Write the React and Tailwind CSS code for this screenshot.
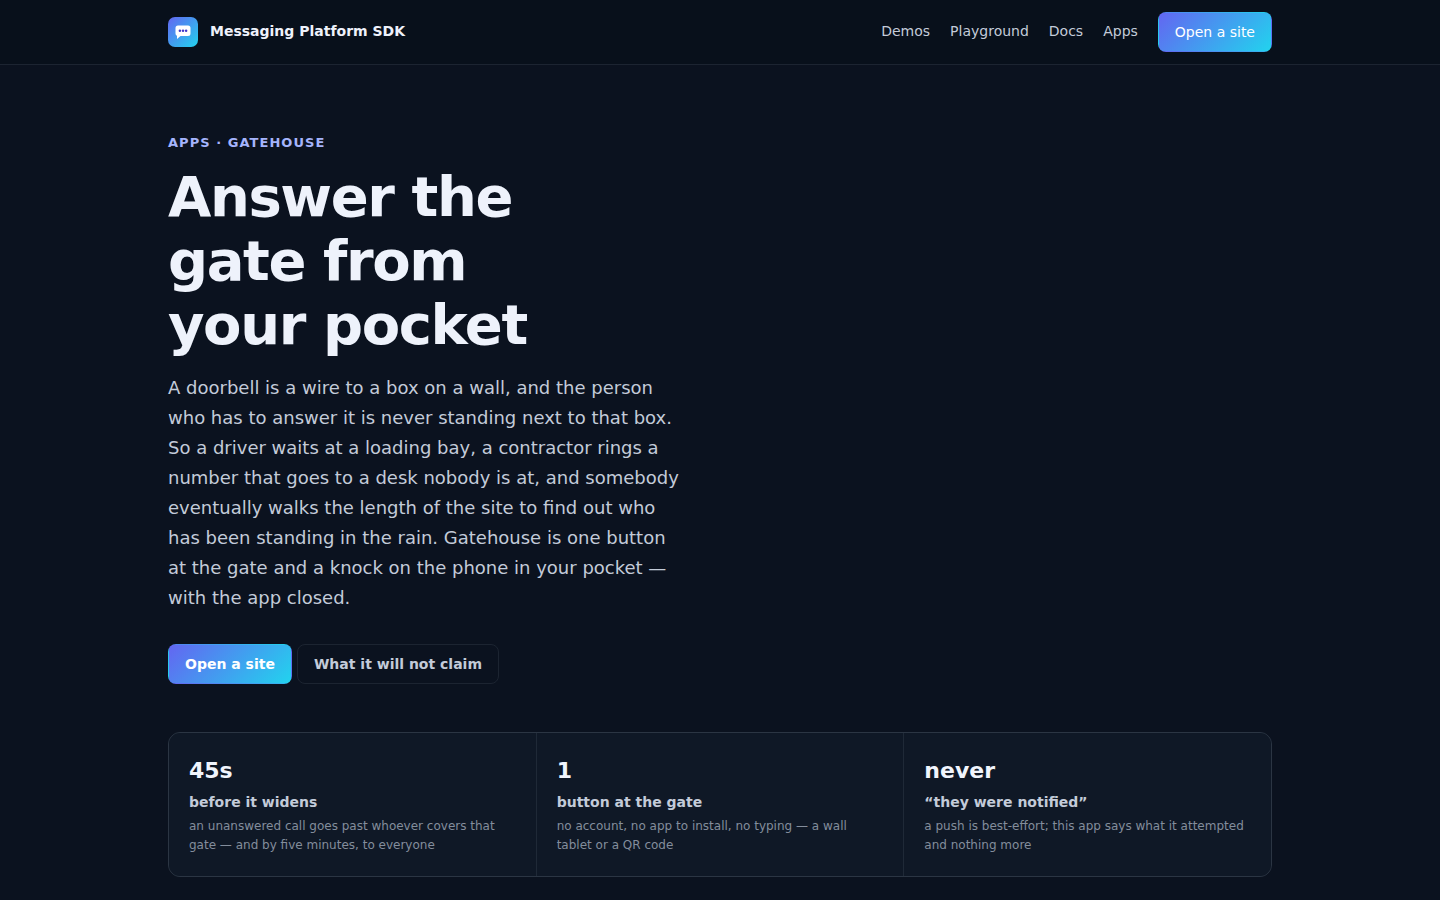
import React from 'react';

const NAV_LINKS = ['Demos', 'Playground', 'Docs', 'Apps'];

const STATS = [
  {
    value: '45s',
    label: 'before it widens',
    detail: 'an unanswered call goes past whoever covers that gate — and by five minutes, to everyone',
  },
  {
    value: '1',
    label: 'button at the gate',
    detail: 'no account, no app to install, no typing — a wall tablet or a QR code',
  },
  {
    value: 'never',
    label: '“they were notified”',
    detail: 'a push is best-effort; this app says what it attempted and nothing more',
  },
];

const Logo = () => (
  <svg className="size-[30px]" viewBox="0 0 30 30" aria-hidden="true">
    <defs>
      <linearGradient id="logo-bg" x1="0" y1="0" x2="1" y2="1">
        <stop offset="0" stopColor="#6366f1" />
        <stop offset="1" stopColor="#22d3ee" />
      </linearGradient>
    </defs>
    <rect width="30" height="30" rx="7" fill="url(#logo-bg)" />
    <path
      d="M10 8.500h10a2.500 2.500 0 0 1 2.500 2.500v5.500a2.500 2.500 0 0 1-2.500 2.500h-7.500L9 22v-3.200a2.500 2.500 0 0 1-1.500-2.300V11a2.500 2.500 0 0 1 2.500-2.500z"
      fill="#fff"
    />
    <circle cx="11.900" cy="13.800" r="1.250" fill="#4338ca" />
    <circle cx="15" cy="13.800" r="1.250" fill="#4338ca" />
    <circle cx="18.100" cy="13.800" r="1.250" fill="#4338ca" />
  </svg>
);

// Gradient call to action, used in the header and in the hero
const PrimaryLink = ({ href, className = '', children }) => (
  <a
    href={href}
    className={`inline-flex h-10 items-center rounded-lg border border-transparent bg-linear-135/srgb from-[#6366f1] to-[#22d3ee] px-4 text-sm text-white ${className}`}
  >
    {children}
  </a>
);

const Header = () => (
  <header className="border-b border-[#1c2431] bg-[#08101b]">
    <div className="mx-auto flex h-16 max-w-[1152px] items-center justify-between px-6">
      <a href="#" className="flex items-center gap-3 text-sm font-bold text-[#eef2fb]">
        <Logo />
        <span className="pb-0.5">Messaging Platform SDK</span>
      </a>
      <nav className="flex items-center gap-5 text-sm text-[#c3cbd9]">
        {NAV_LINKS.map((link) => (
          <a key={link} href={`#${link.toLowerCase()}`} className="pb-0.5">
            {link}
          </a>
        ))}
        <PrimaryLink href="#open">Open a site</PrimaryLink>
      </nav>
    </div>
  </header>
);

// The one-pixel grid gap lets the list's own background through as the dividers
const Stats = () => (
  <dl className="mt-12 grid grid-cols-3 gap-px overflow-hidden rounded-xl border border-[#2b3543] bg-[#1f2937]">
    {STATS.map((stat) => (
      <div key={stat.label} className="bg-[#0f1826] px-5 pt-5 pb-[21px]">
        <dt className="flex flex-col gap-0.5">
          <span className="text-[22px] leading-9 font-bold text-[#f1f5fd]">{stat.value}</span>
          <span className="text-sm leading-[22px] font-bold text-[#c3cbd9]">{stat.label}</span>
        </dt>
        <dd className="mt-1 text-xs leading-[19px] text-[#838d9c]">{stat.detail}</dd>
      </div>
    ))}
  </dl>
);

const App = () => (
  <div className="min-h-screen bg-[#0b121f] font-['DejaVu_Sans',sans-serif]">
    <Header />
    <main className="mx-auto max-w-[1152px] px-6 pt-17 pb-5">
      <p className="text-[13px] leading-5 font-bold tracking-[0.08em] text-[#a5b4fc] uppercase">
        Apps · Gatehouse
      </p>
      <h1 className="mt-3 max-w-[400px] text-[56px] leading-16 font-bold tracking-tight text-[#eef2fb]">
        Answer the gate from your pocket
      </h1>
      <p className="mt-4 max-w-[520px] text-lg leading-[30px] text-[#c3cbd9]">
        A doorbell is a wire to a box on a wall, and the person who has to answer it is never
        standing next to that box. So a driver waits at a loading bay, a contractor rings a number
        that goes to a desk nobody is at, and somebody eventually walks the length of the site to
        find out who has been standing in the rain. Gatehouse is one button at the gate and a knock
        on the phone in your pocket — with the app closed.
      </p>
      <div className="mt-[31px] flex gap-[5px]">
        <PrimaryLink href="#open" className="font-bold">
          Open a site
        </PrimaryLink>
        <a
          href="#limits"
          className="inline-flex h-10 items-center rounded-lg border border-[#1c2431] px-4 text-sm font-bold text-[#c3cbd9]"
        >
          What it will not claim
        </a>
      </div>
      <Stats />
    </main>
  </div>
);

export default App;
